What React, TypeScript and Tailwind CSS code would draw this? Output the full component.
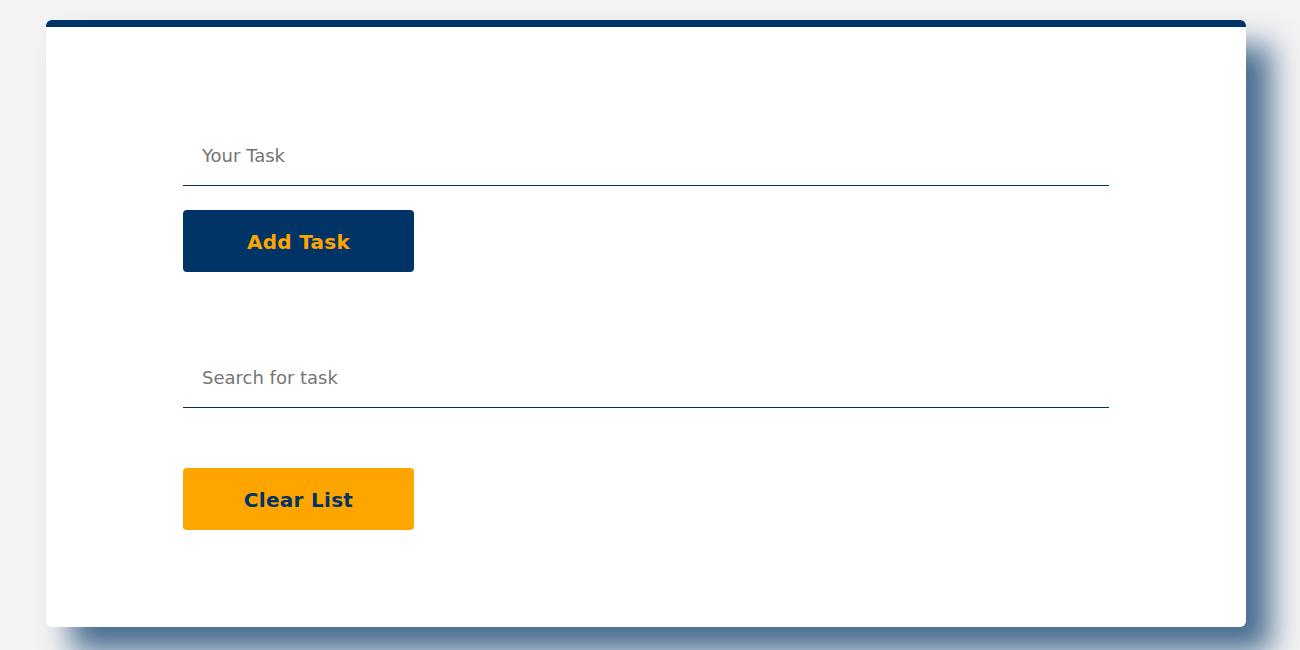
import React from "react";

export default function App() {
  return (
    <div className="min-h-[650px] w-full bg-[#f3f3f3] pt-5 pl-[46px] pr-[54px]" style={{ fontFamily: '"DejaVu Sans", Verdana, sans-serif' }}>
      <div className="w-[1200px] h-[607px] bg-white rounded-md border-t-[7px] border-[#003366] shadow-[25px_25px_30px_rgba(0,51,102,0.7)] pl-[137px] pt-[99px]">
        <div className="w-[926px]">
          <input
            type="text"
            placeholder="Your Task"
            className="w-full h-[60px] border-b border-[#003366] pl-[19px] text-[18px] text-[#333] placeholder:text-[#757575] outline-none bg-transparent"
          />
          <button className="mt-6 w-[231px] h-[62px] rounded-[4px] bg-[#003366] text-[#ffa500] text-[20px] font-bold tracking-[0.3px] pt-[2px]">
            Add Task
          </button>
          <input
            type="text"
            placeholder="Search for task"
            className="mt-[76px] w-full h-[60px] border-b border-[#003366] pl-[19px] text-[18px] text-[#333] placeholder:text-[#757575] outline-none bg-transparent"
          />
          <button className="mt-[60px] w-[231px] h-[62px] rounded-[4px] bg-[#ffa500] text-[#003366] text-[20px] font-bold tracking-[0.3px] pt-[2px]">
            Clear List
          </button>
        </div>
      </div>
    </div>
  );
}
